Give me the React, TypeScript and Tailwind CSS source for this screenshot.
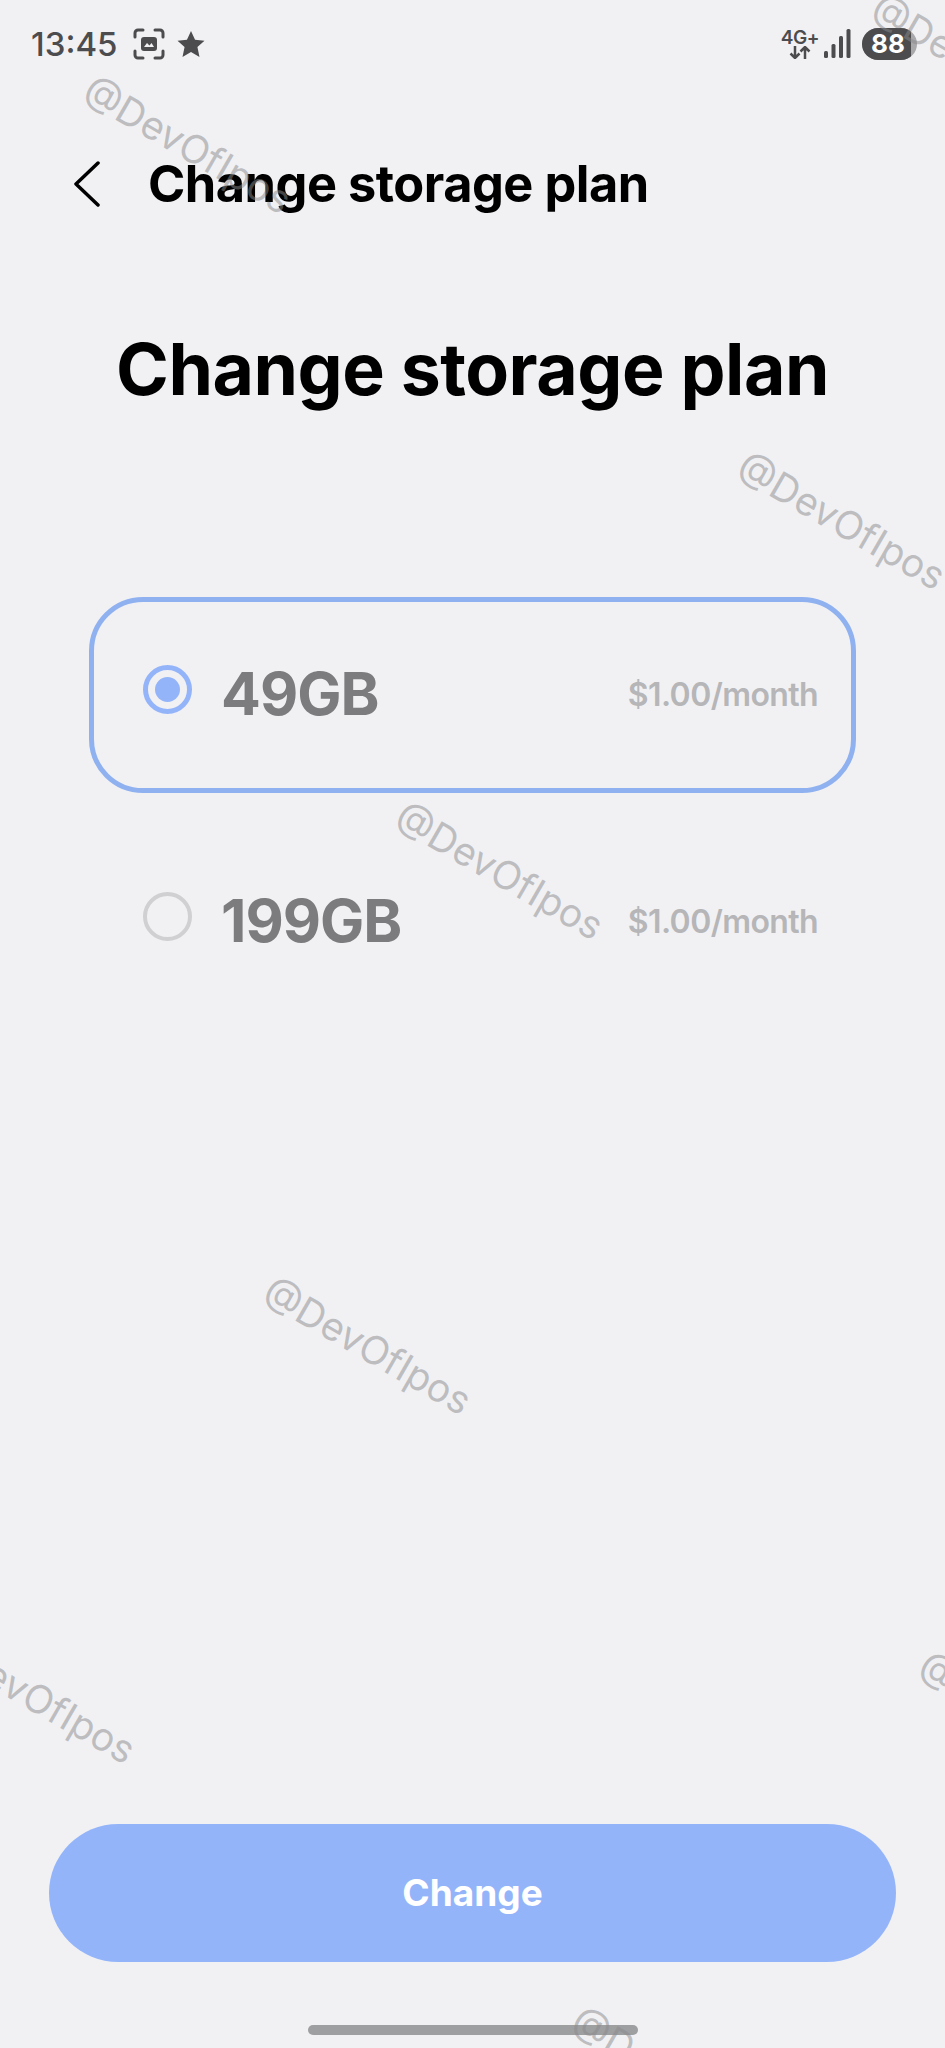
interface PlanRowProps {
  size: string
  price: string
  selected?: boolean
}

function PlanRow({ size, price, selected }: PlanRowProps): React.JSX.Element {
  return (
    <div
      className={`flex h-[196px] items-center rounded-[54px] border-[5px] pl-[49px] pr-[33px] ${
        selected ? 'border-[#8fb1f0]' : 'border-transparent'
      }`}
    >
      {selected ? (
        <span className="mb-[10px] flex h-[49px] w-[49px] items-center justify-center rounded-full border-[5px] border-[#94b4fa]">
          <span className="h-[25px] w-[25px] rounded-full bg-[#94b4fa]" />
        </span>
      ) : (
        <span className="mb-[10px] h-[49px] w-[49px] rounded-full border-[4px] border-[#d0d0d2]" />
      )}
      <span className="mb-[2px] ml-[29px] text-[59px] leading-none font-bold tracking-[-1px] text-[#7c7c7e]">{size}</span>
      <span className="ml-auto text-[32px] leading-none font-semibold tracking-[-0.6px] text-[#b6b6b8]">{price}</span>
    </div>
  )
}

function Watermark({ className }: { className: string }): React.JSX.Element {
  return (
    <span
      className={`pointer-events-none absolute origin-top-left rotate-[30deg] text-[39px] leading-[44px] font-normal whitespace-nowrap text-[#8a8a8c]/50 ${className}`}
    >
      @DevOfIpos
    </span>
  )
}

function StatusBar(): React.JSX.Element {
  return (
    <div className="flex h-[88px] items-center pl-[31px] pr-[28px] text-[#4c4c4e]">
      <span className="text-[33px] leading-none font-medium">13:45</span>
      <svg className="ml-[16px]" width="32" height="32" viewBox="0 0 32 32" fill="none">
        <path
          d="M2 9V5a3 3 0 0 1 3-3h5M22 2h5a3 3 0 0 1 3 3v4M30 23v4a3 3 0 0 1-3 3h-5M10 30H5a3 3 0 0 1-3-3v-4"
          stroke="currentColor"
          strokeWidth="3"
          strokeLinecap="round"
        />
        <rect x="8" y="9" width="16" height="14" rx="3" fill="currentColor" />
        <path d="M11 19l3-4 2.500 2.500L18.500 15l2.500 4z" fill="#f1f1f4" />
      </svg>
      <svg className="ml-[12px]" width="28" height="27" viewBox="0 0 27 26" fill="currentColor">
        <path d="M13.500 0l3.900 8.300 9.100 1-6.800 6.100 2 9.600-8.200-4.800L5.300 25l2-9.600L.5 9.300l9.100-1z" />
      </svg>
      <div className="ml-auto flex flex-col items-center">
        <span className="text-[19px] leading-[17px] font-semibold tracking-[-0.5px]">4G+</span>
        <svg width="22" height="13" viewBox="0 0 22 13" fill="none" stroke="currentColor" strokeWidth="2.500">
          <path d="M6 0v12M1.500 7.500L6 12l4.500-4.500M16 13V1M11.500 5.500L16 1l4.500 4.500" />
        </svg>
      </div>
      <svg className="ml-[5px]" width="27" height="30" viewBox="0 0 27 30" fill="currentColor">
        <rect x="0" y="22" width="4" height="7" rx="1.500" />
        <rect x="7.500" y="15" width="4" height="14" rx="1.500" />
        <rect x="15" y="7" width="4" height="22" rx="1.500" />
        <rect x="22.500" y="0" width="4" height="29" rx="1.500" />
      </svg>
      <div className="ml-[11px] flex h-[32px] w-[55px] overflow-hidden rounded-full bg-[#a9a9ab]">
        <span className="flex w-[49px] items-center justify-center rounded-r-[4px] bg-[#4c4c4e] pl-[3px] text-[26px] leading-none font-bold text-white">
          88
        </span>
      </div>
    </div>
  )
}

export default function App(): React.JSX.Element {
  return (
    <div className="relative flex h-[2048px] w-[945px] flex-col overflow-hidden bg-[#f1f1f4] font-['Inter',sans-serif]">
      <StatusBar />

      <div className="mt-[52px] flex h-[88px] items-center pl-[74px]">
        <svg width="26" height="46" viewBox="0 0 26 46" fill="none" stroke="black" strokeWidth="3.5" strokeLinecap="round" strokeLinejoin="round">
          <path d="M24 2L2 23l22 21" />
        </svg>
        <h2 className="ml-[48px] text-[50.500px] leading-none font-bold tracking-[-0.5px] text-black">
          Change storage plan
        </h2>
      </div>

      <h1 className="mt-[106px] text-center text-[71.500px] leading-none font-bold tracking-[-0.5px] text-black">
        Change storage plan
      </h1>

      <div className="mt-[191px] flex flex-col gap-[31px] px-[89px]">
        <PlanRow size="49GB" price="$1.00/month" selected />
        <PlanRow size="199GB" price="$1.00/month" />
      </div>

      <div className="mt-auto px-[49px]">
        <button
          type="button"
          className="flex h-[138px] w-full items-center justify-center rounded-full bg-[#94b4fa] text-[37px] font-bold text-white"
        >
          Change
        </button>
      </div>
      <div className="mt-[63px] mb-[13px] flex justify-center">
        <div className="h-[10px] w-[330px] rounded-full bg-[#9e9fa1]" />
      </div>

      <Watermark className="top-[68px] left-[98px]" />
      <Watermark className="top-[-14px] left-[886px]" />
      <Watermark className="top-[444px] left-[752px]" />
      <Watermark className="top-[794px] left-[410px]" />
      <Watermark className="top-[1269px] left-[278px]" />
      <Watermark className="top-[1618px] left-[-58px]" />
      <Watermark className="top-[1644px] left-[933px]" />
      <Watermark className="top-[1999px] left-[586px]" />
    </div>
  )
}
